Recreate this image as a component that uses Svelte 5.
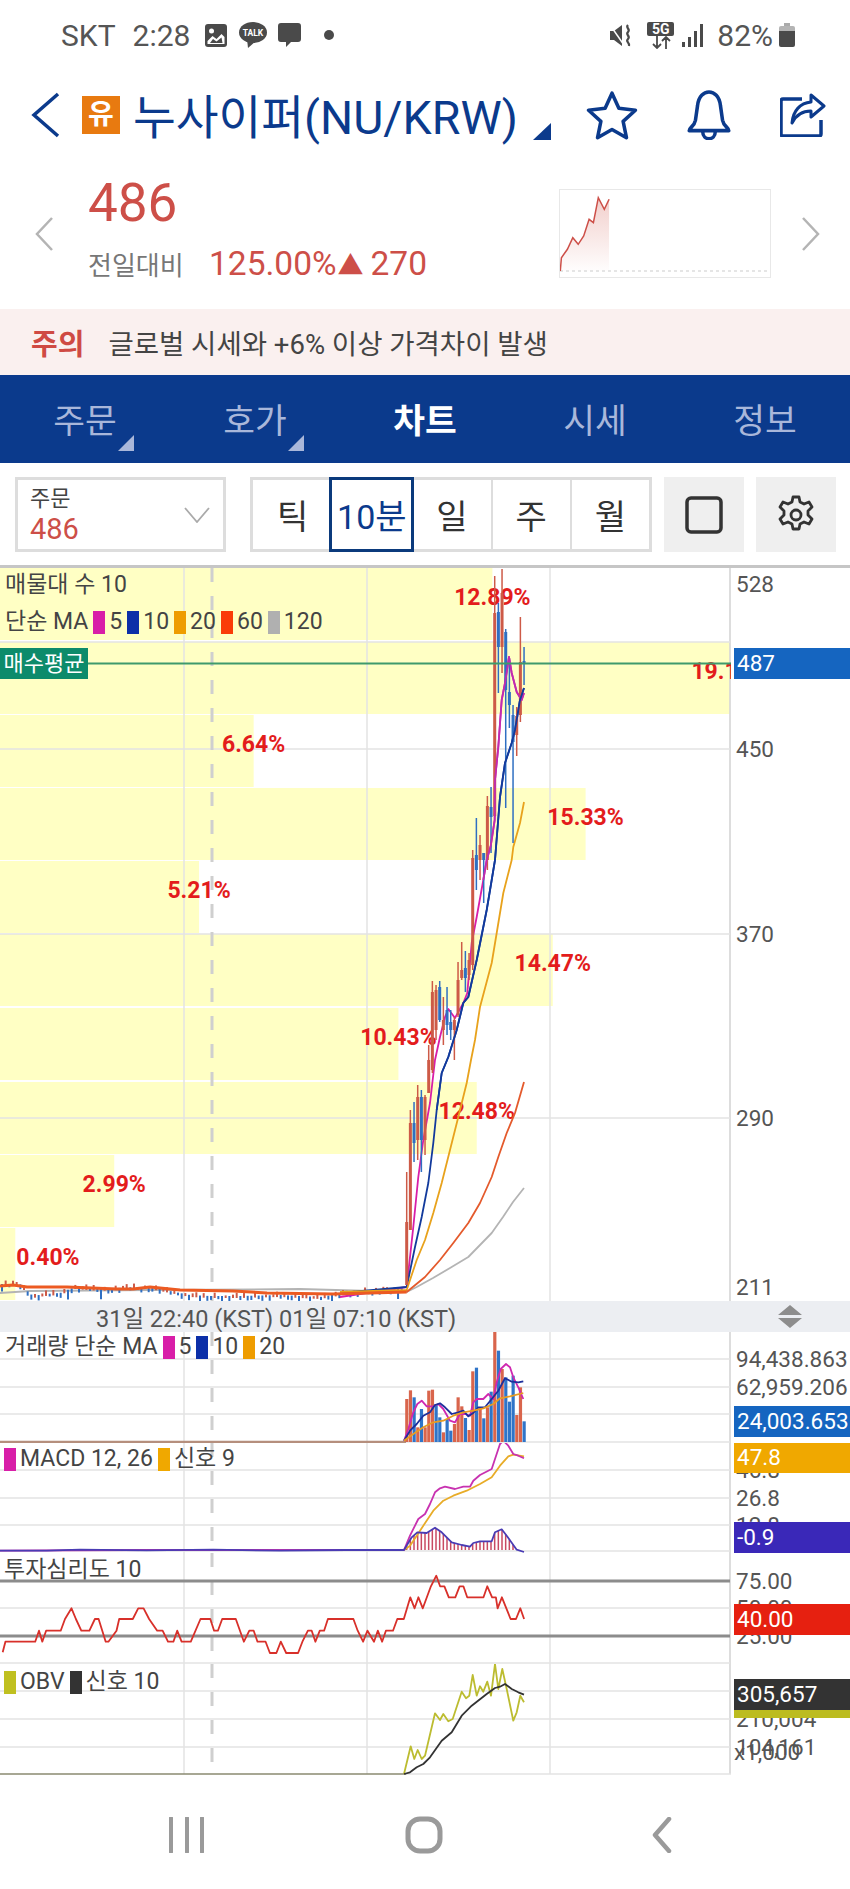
<script>
  // 화면 좌표 그대로 쓰는 차트 데이터 (viewBox가 페이지 y를 따른다)
  const gridX = [184, 367, 550];

  const line = (arr, ox = 0, oy = 0, sx = 1, sy = 1) =>
    arr.map(([x, y]) => `${(ox + x * sx).toFixed(1)},${(oy + y * sy).toFixed(1)}`).join(" ");

  // 매물대
  const bandTops = [568, 642, 715, 788, 861, 934, 1008, 1082, 1155, 1228];
  const bandPct = [12.89, 19.1, 6.64, 15.33, 5.21, 14.47, 10.43, 12.48, 2.99, 0.4];
  const bands = bandTops.map((top, i) => {
    const width = bandPct[i] * 38.2;
    return {
      top,
      width,
      label: bandPct[i].toFixed(2) + "%",
      x: Math.max(width, 48),
      y: top + 37
    };
  });

  // [색, 고가, 저가, 몸통위, 몸통아래]
  const R = "#cd5a47";
  const B = "#2f6fc2";
  const candles = [
    [R, 1172, 1285, 1222, 1285], [R, 1110, 1230, 1123, 1230], [B, 1102, 1162, 1123, 1143],
    [R, 1085, 1160, 1097, 1140], [B, 1090, 1172, 1097, 1140], [R, 1095, 1155, 1097, 1140],
    [R, 1045, 1093, 1060, 1093], [R, 981, 1073, 992, 1070], [R, 985, 1040, 990, 1030],
    [B, 981, 1022, 987, 1020], [R, 997, 1045, 1020, 1030], [B, 987, 1035, 1010, 1025],
    [B, 1010, 1040, 1022, 1030], [R, 1017, 1060, 1020, 1030], [R, 962, 1017, 980, 1015],
    [R, 942, 980, 970, 978], [B, 951, 992, 968, 978], [R, 953, 980, 960, 975],
    [R, 850, 970, 858, 965], [B, 818, 890, 855, 870], [R, 835, 880, 845, 860],
    [B, 853, 903, 853, 860], [R, 796, 870, 806, 860], [B, 787, 853, 807, 817],
    [R, 576, 817, 613, 816], [B, 603, 693, 612, 647], [R, 569, 673, 593, 647],
    [B, 629, 808, 632, 690], [B, 658, 728, 692, 705], [B, 705, 843, 715, 742],
    [R, 707, 756, 716, 735], [R, 617, 722, 662, 715], [B, 647, 685, 661, 664]
  ].map(([color, hi, lo, top, bottom], i) => ({ color, hi, lo, top, bottom, x: 406.7 + i * 3.667 }));

  // 급등 전 횡보 구간
  const flatLevels = [
    [0, 1285], [20, 1285], [25, 1290], [33, 1297], [45, 1295], [60, 1294], [75, 1288], [100, 1290],
    [135, 1288], [150, 1288], [170, 1292], [190, 1296], [210, 1297], [240, 1297], [280, 1296],
    [320, 1298], [350, 1293], [406, 1289]
  ];
  const levelAt = (x) => {
    for (let i = 1; i < flatLevels.length; i++) {
      const [x0, y0] = flatLevels[i - 1];
      const [x1, y1] = flatLevels[i];
      if (x <= x1) return y0 + ((x - x0) / (x1 - x0)) * (y1 - y0);
    }
    return 1289;
  };
  const flatCandles = Array.from({ length: 110 }, (_, i) => {
    const x = 2 + i * 3.667;
    const up = Math.sin(i * 2.3) > 0.1;
    const size = 1.5 + Math.abs(Math.sin(i * 1.7)) * 3;
    const y = levelAt(x);
    return {
      x,
      color: up ? R : B,
      y1: up ? y - size : y - 1,
      y2: up ? y + 1 : y + size + (i % 9 === 0 ? 5 : 0)
    };
  });

  const ma5 = [[340, 1297], [406.7, 1287], [413.3, 1227], [418.3, 1177], [423.3, 1140], [430, 1103], [435, 1060], [440, 1037], [445, 1017], [448.3, 1009], [455, 1018], [463.3, 1003], [467.3, 993], [471.7, 943], [476.7, 917], [483.3, 880], [486.7, 860], [490.7, 846], [494.7, 820], [495, 780], [498.3, 747], [501.7, 700], [505, 683], [509, 657], [511.7, 673], [516.7, 692], [521.7, 700], [524, 693]];
  const ma10 = [[340, 1293], [406.7, 1287], [415, 1247], [421.7, 1217], [428.3, 1183], [433.3, 1143], [436.7, 1110], [441.7, 1073], [448.3, 1057], [456.7, 1030], [463.3, 1003], [468.3, 997], [476.7, 960], [486.7, 910], [491.7, 880], [495, 860], [500, 797], [505, 763], [511.7, 743], [515, 730], [520, 700], [524, 688]];
  const ma20 = [[340, 1292], [406.7, 1290], [416.7, 1260], [425, 1240], [433.3, 1213], [441.7, 1183], [450, 1150], [458.3, 1117], [466.7, 1083], [471, 1060], [475, 1040], [480, 1007], [491.7, 963], [496.7, 933], [503.3, 893], [511.7, 860], [513.3, 847], [520, 823], [524, 802]];
  const ma60Flat = [[0, 1286], [13, 1285], [27, 1287], [67, 1287], [117, 1289], [133, 1289], [150, 1287], [180, 1290], [233, 1291], [267, 1293], [333, 1294], [406.7, 1292]];
  const ma60 = [[406.7, 1292], [425, 1277], [440, 1260], [453.3, 1243], [468.3, 1223], [480, 1203], [491.7, 1177], [498.3, 1157], [506.7, 1133], [515, 1113], [524, 1082]];
  const ma120 = [[0, 1293], [30, 1291], [150, 1290], [300, 1289], [406.7, 1292], [416.7, 1287], [433, 1278], [450, 1268], [468.3, 1257], [480, 1245], [491.7, 1233], [503, 1217], [513, 1202], [524, 1188]];

  const legendMain = [["#d81ea8", "5"], ["#0c2fa8", "10"], ["#ee9c00", "20"], ["#fa3c08", "60"], ["#b0b0b0", "120"]];

  // 거래량 (줌 좌표: x=380+X/3, y=1320+Y/3)
  const volTops = [240, 214, 235, 325, 270, 325, 215, 212, 255, 295, 340, 300, 335, 315, 235, 262, 297, 333, 157, 146, 265, 298, 265, 218, 38, 95, 150, 175, 248, 170, 288, 205, 307];
  const volColors = "RRBRBRRRBBRBBRRRBRRBRBRBRBRBBBRRB";
  const volumes = volTops.map((y, i) => ({
    x: 406.7 + i * 3.667,
    y: 1320 + y / 3,
    color: volColors[i] === "R" ? "#d9654c" : "#2f74c8"
  }));
  const volMa5 = [[72, 365], [85, 330], [100, 280], [112, 255], [125, 245], [140, 262], [160, 262], [175, 255], [190, 270], [210, 305], [225, 310], [240, 285], [255, 285], [270, 290], [280, 250], [290, 240], [310, 240], [325, 225], [340, 240], [350, 190], [362, 150], [378, 135], [390, 145], [400, 175], [415, 205], [430, 240]];
  const volMa10 = [[72, 365], [90, 335], [110, 315], [130, 290], [150, 280], [165, 258], [180, 253], [195, 265], [215, 285], [235, 280], [250, 275], [265, 292], [280, 282], [295, 265], [315, 265], [335, 240], [355, 215], [375, 178], [395, 188], [415, 190], [430, 187]];
  const volMa20 = [[72, 365], [100, 345], [130, 325], [160, 310], [190, 305], [220, 290], [250, 280], [280, 275], [310, 268], [340, 255], [360, 238], [390, 232], [430, 222]];

  // MACD (줌 좌표: x=380+X/3, y=1440+Y/3)
  const macd = [[-1140, 335], [-700, 333], [72, 333], [90, 290], [115, 240], [135, 225], [150, 195], [165, 160], [180, 148], [195, 143], [225, 150], [250, 143], [270, 143], [280, 125], [300, 108], [335, 90], [345, 60], [360, 15], [370, 5], [385, 20], [400, 45], [415, 50], [432, 58]];
  const signal = [[72, 333], [90, 320], [110, 290], [130, 260], [160, 215], [190, 185], [220, 170], [260, 155], [300, 135], [335, 115], [360, 80], [385, 52], [400, 47], [432, 52]];
  const osc = [[-1140, 335], [-1000, 335], [-900, 332], [-700, 334], [-500, 332], [-300, 335], [-100, 333], [72, 333], [95, 295], [112, 280], [140, 282], [165, 266], [185, 280], [215, 310], [245, 318], [270, 323], [280, 312], [300, 307], [335, 307], [345, 280], [365, 271], [380, 290], [410, 332], [432, 339]];
  const oscAt = (x) => {
    for (let i = 1; i < osc.length; i++) {
      const [x0, y0] = osc[i - 1];
      const [x1, y1] = osc[i];
      if (x <= x1) return y0 + ((x - x0) / (x1 - x0)) * (y1 - y0);
    }
    return 333;
  };
  const oscBars = Array.from({ length: 31 }, (_, i) => {
    const X = 80 + i * 11;
    return { x: 380 + X / 3, y: 1440 + oscAt(X) / 3 };
  });

  // 투자심리도 (줌 좌표: x=X/1.845, y=1530+Y/3)
  const psy = [[5, 370], [10, 338], [65, 338], [72, 305], [78, 338], [85, 305], [112, 305], [120, 270], [132, 238], [140, 270], [150, 305], [165, 305], [175, 270], [182, 270], [195, 338], [200, 338], [215, 305], [220, 270], [245, 270], [255, 238], [265, 238], [275, 270], [290, 305], [300, 305], [310, 338], [320, 338], [327, 305], [335, 338], [352, 338], [370, 270], [388, 270], [395, 305], [402, 305], [410, 270], [435, 270], [450, 338], [460, 305], [468, 305], [475, 338], [490, 338], [498, 372], [510, 372], [518, 338], [528, 372], [550, 372], [558, 338], [568, 305], [575, 305], [582, 338], [590, 305], [598, 305], [605, 270], [652, 270], [660, 305], [670, 338], [678, 305], [690, 338], [697, 305], [705, 338], [712, 305], [725, 305], [733, 270], [745, 270], [757, 205], [765, 238], [772, 205], [780, 238], [795, 172], [805, 140], [812, 172], [820, 172], [828, 205], [840, 205], [848, 172], [855, 172], [862, 205], [892, 205], [899, 172], [908, 205], [915, 205], [918, 238], [926, 205], [942, 270], [952, 270], [960, 238], [967, 270]];

  // OBV (줌 좌표: x=380+X/3, y=1440+Y/3)
  const obv = [[72, 1005], [92, 922], [103, 960], [113, 933], [125, 960], [135, 950], [165, 823], [180, 843], [190, 825], [205, 847], [218, 840], [245, 758], [258, 778], [268, 770], [278, 708], [290, 770], [300, 742], [310, 758], [322, 728], [333, 770], [345, 675], [355, 750], [367, 690], [380, 750], [400, 845], [410, 820], [421, 770], [432, 790]];
  const obvSignal = [[72, 1005], [90, 1000], [110, 985], [130, 975], [150, 955], [185, 905], [215, 880], [245, 830], [275, 800], [320, 765], [345, 747], [360, 743], [375, 735], [395, 750], [415, 760], [432, 767]];

  const spark = [[1032, 810], [1034, 770], [1045, 745], [1055, 710], [1065, 730], [1075, 705], [1085, 655], [1093, 665], [1102, 590], [1113, 625], [1122, 595]];
  const sparkPts = spark.map(([x, y]) => [x / 1.845 - 559, y / 3 - 189]);
</script>

<div class="phone">
  <div class="status">
    <span class="carrier">SKT</span>
    <span class="clock">2:28</span>
    <svg class="pic" width="22" height="23" viewBox="0 0 22 23">
      <rect x="0" y="0" width="22" height="23" rx="3" fill="#4a4a4a" />
      <circle cx="6.500" cy="7" r="2.500" fill="#fff" />
      <path d="M2.500 20v-3l5-5 4 3 5-5 3 3v7z" fill="#fff" />
      <path d="M5 19l3-4 3.500 2.500 5-4 1 5.500z" fill="#4a4a4a" />
    </svg>
    <svg class="kakao" width="28" height="26" viewBox="0 0 28 26">
      <ellipse cx="14" cy="10.500" rx="14" ry="10.500" fill="#4a4a4a" />
      <path d="M8 17l1 9 8-7z" fill="#4a4a4a" />
      <text x="14" y="13.500" class="kakao-text">TALK</text>
    </svg>
    <svg class="chat" width="23" height="24" viewBox="0 0 23 24">
      <path d="M3 0h17a3 3 0 0 1 3 3v13a3 3 0 0 1-3 3h-7l-5 5v-5H3a3 3 0 0 1-3-3V3a3 3 0 0 1 3-3z" fill="#4a4a4a" />
    </svg>
    <span class="dot"></span>
    <span class="spacer"></span>
    <svg width="24" height="23" viewBox="0 0 24 23">
      <path d="M0 7h4l8-6v21l-8-6H0z" fill="#4a4a4a" />
      <path d="M0 1l14 20" stroke="#fff" stroke-width="1.500" />
      <path d="M18 1c-3 3 3 4 0 7s3 4 0 7 2 3 1 7" fill="none" stroke="#4a4a4a" stroke-width="2.200" />
    </svg>
    <span class="net">
      <b>5G</b>
      <svg width="22" height="13" viewBox="0 0 22 13">
        <path d="M7 0v12M3 8l4 4 4-4M16 13V1M12 5l4-4 4 4" fill="none" stroke="#4a4a4a" stroke-width="1.800" />
      </svg>
    </span>
    <svg class="bars" width="21" height="23" viewBox="0 0 21 23">
      <rect x="0" y="18" width="3" height="5" fill="#4a4a4a" />
      <rect x="6" y="13" width="3" height="10" fill="#4a4a4a" />
      <rect x="12" y="7" width="3" height="16" fill="#4a4a4a" />
      <rect x="18" y="0" width="3" height="23" fill="#4a4a4a" />
    </svg>
    <span class="batt-text">82%</span>
    <svg width="16" height="24" viewBox="0 0 16 24">
      <path d="M5 0h6v3H5z" fill="#aaa" />
      <path d="M2 3h12a2 2 0 0 1 2 2v4H0V5a2 2 0 0 1 2-2z" fill="#b4b4b4" />
      <path d="M0 8h16v14a2 2 0 0 1-2 2H2a2 2 0 0 1-2-2z" fill="#4a4a4a" />
    </svg>
  </div>

  <header class="title-row">
    <svg class="back" width="29" height="46" viewBox="0 0 29 46">
      <path d="M27 2L3 23l24 21" fill="none" stroke="#0b3a8c" stroke-width="3.500" />
    </svg>
    <span class="badge">유</span>
    <h1>누사이퍼(NU/KRW)</h1>
    <span class="corner title-corner"></span>
    <div class="actions">
      <svg width="52" height="50" viewBox="0 0 50 48">
        <path d="M25 3l6.600 14.600 15.900 1.800-11.800 10.700 3.200 15.700L25 37.900l-13.900 7.900 3.200-15.700L2.500 19.400l15.900-1.800z" fill="none" stroke="#0b3a8c" stroke-width="3.400" stroke-linejoin="round" />
      </svg>
      <svg width="46" height="50" viewBox="0 0 44 48">
        <path d="M3 39c0-3 5-4 6-10l2-14C12 6 17 2 22 2s10 4 11 13l2 14c1 6 6 7 6 10z" fill="none" stroke="#0b3a8c" stroke-width="3.400" stroke-linejoin="round" />
        <path d="M16 40c0 9 12 9 12 0" fill="none" stroke="#0b3a8c" stroke-width="3.400" />
      </svg>
      <svg width="46" height="44" viewBox="0 0 46 44">
        <path d="M22 6H3a2 2 0 0 0-2 2v33a2 2 0 0 0 2 2h36a2 2 0 0 0 2-2V27" fill="none" stroke="#0b3a8c" stroke-width="3.500" />
        <path d="M31 2l13 11-13 11v-6c-9 0-15 4-19 12 1-12 8-20 19-21z" fill="none" stroke="#0b3a8c" stroke-width="3" stroke-linejoin="round" />
      </svg>
    </div>
  </header>

  <section class="quote">
    <svg class="pager" width="19" height="34" viewBox="0 0 19 34">
      <path d="M17 1L2 17l15 16" fill="none" stroke="#b4b4b4" stroke-width="2.500" />
    </svg>
    <div class="quote-text">
      <div class="price">486</div>
      <div class="change">
        <span class="change-label">전일대비</span>
        <span class="change-val">125.00%</span>
        <span class="change-arrow">▲</span>
        <span class="change-val">270</span>
      </div>
    </div>
    <div class="mini">
      <svg width="210" height="87" viewBox="0 0 210 87">
        <defs>
          <linearGradient id="sparkFill" x1="0" y1="0" x2="0" y2="1">
            <stop offset="0" stop-color="#e7a8a2" stop-opacity="0.55" />
            <stop offset="1" stop-color="#e7a8a2" stop-opacity="0.02" />
          </linearGradient>
        </defs>
        <polygon points="{line(sparkPts)} 49,81 0,81" fill="url(#sparkFill)" />
        <line x1="0" y1="81" x2="210" y2="81" stroke="#ddd" stroke-width="1.500" stroke-dasharray="3 3" />
        <polyline points={line(sparkPts)} fill="none" stroke="#cd4f48" stroke-width="1.500" />
      </svg>
    </div>
    <svg class="pager" width="19" height="34" viewBox="0 0 19 34">
      <path d="M2 1l15 16L2 33" fill="none" stroke="#b4b4b4" stroke-width="2.500" />
    </svg>
  </section>

  <div class="notice">
    <b>주의</b>
    <span>글로벌 시세와 +6% 이상 가격차이 발생</span>
  </div>

  <nav class="tabs">
    <div class="tab">주문<span class="corner light"></span></div>
    <div class="tab">호가<span class="corner light"></span></div>
    <div class="tab active">차트</div>
    <div class="tab">시세</div>
    <div class="tab">정보</div>
  </nav>

  <div class="toolbar">
    <div class="select">
      <div class="select-text">
        <span class="select-name">주문</span>
        <span class="select-price">486</span>
      </div>
      <svg width="26" height="16" viewBox="0 0 26 16">
        <path d="M1 1l12 14L25 1" fill="none" stroke="#aaa" stroke-width="1.800" />
      </svg>
    </div>
    <div class="segments">
      <button>틱</button>
      <button class="on">10분</button>
      <button>일</button>
      <button>주</button>
      <button>월</button>
    </div>
    <div class="square">
      <svg width="38" height="38" viewBox="0 0 38 38">
        <rect x="2" y="2" width="34" height="34" rx="4" fill="none" stroke="#333" stroke-width="3.500" />
      </svg>
    </div>
    <div class="square">
      <svg width="40" height="40" viewBox="0 0 40 40">
        <path d="M17 2h6l1 5 4 2 5-2 3 5-4 4v4l4 4-3 5-5-2-4 2-1 5h-6l-1-5-4-2-5 2-3-5 4-4v-4l-4-4 3-5 5 2 4-2z" fill="none" stroke="#333" stroke-width="2.800" stroke-linejoin="round" />
        <circle cx="20" cy="20" r="5" fill="none" stroke="#333" stroke-width="2.800" />
      </svg>
    </div>
  </div>

  <div class="chart">
    <!-- 가격 -->
    <div class="pane main">
      <svg class="plot" width="731" height="733" viewBox="0 568 731 733">
        {#each bands as b}
          <rect x="0" y={b.top} width={b.width} height="72" fill="#ffffc4" />
        {/each}
        {#each gridX as x}
          <line x1={x} y1="568" x2={x} y2="1301" class="grid" />
        {/each}
        <line x1="730" y1="568" x2="730" y2="1301" class="grid axis-line" />
        {#each [642, 749, 934, 1118] as y}
          <line x1="0" y1={y} x2="730" y2={y} class="grid" />
        {/each}
        <line x1="212" y1="568" x2="212" y2="1301" class="dash" />
        {#each bands as b}
          <text x={b.x} y={b.y} class="pct">{b.label}</text>
        {/each}
        <polyline points={line(ma120)} class="ma" stroke="#b4b4b4" />
        {#each flatCandles as c}
          <line x1={c.x} y1={c.y1} x2={c.x} y2={c.y2} stroke={c.color} stroke-width="2" />
        {/each}
        <polyline points={line(ma5)} class="ma" stroke="#d81ea8" />
        <polyline points={line(ma10)} class="ma" stroke="#123a9c" />
        <polyline points={line(ma20)} class="ma" stroke="#e8a21c" />
        <polyline points={line(ma60Flat)} class="ma thick" stroke="#ec5a22" />
        <polyline points={line(ma60)} class="ma" stroke="#e45a2c" />
        {#each candles as c}
          <line x1={c.x} y1={c.hi} x2={c.x} y2={c.lo} stroke={c.color} stroke-width="1.500" />
          <rect x={c.x - 1.5} y={c.top} width="3" height={c.bottom - c.top} fill={c.color} />
        {/each}
        <polyline points={line(ma5.slice(15))} class="ma" stroke="#c02cb0" />
        <polyline points={line(ma10.slice(6))} class="ma" stroke="#123a9c" />
        <line x1="88" y1="663.500" x2="731" y2="663.500" stroke="#3f9a6c" stroke-width="2" />
      </svg>
      <div class="legend first">매물대 수 10</div>
      <div class="legend second">
        <span>단순 MA</span>
        {#each legendMain as [color, label]}
          <i style="background:{color}"></i><span>{label}</span>
        {/each}
      </div>
      <div class="buy-tag">매수평균</div>
      <div class="axis">
        <span class="tick" style="top:16px">528</span>
        <span class="tick" style="top:181px">450</span>
        <span class="tick" style="top:366px">370</span>
        <span class="tick" style="top:550px">290</span>
        <span class="tick" style="top:719px">211</span>
        <span class="tag blue" style="top:80px">487</span>
      </div>
    </div>

    <div class="timebar">
      <span>31일 22:40 (KST) 01일 07:10 (KST)</span>
      <svg width="26" height="24" viewBox="0 0 26 24">
        <path d="M13 0l12 10H1zM1 13h24L13 23z" fill="#8d8d8d" />
      </svg>
    </div>

    <!-- 거래량 -->
    <div class="pane vol">
      <svg class="plot" width="731" height="111" viewBox="0 1333 731 111">
        {#each gridX as x}
          <line x1={x} y1="1333" x2={x} y2="1444" class="grid" />
        {/each}
        <line x1="730" y1="1333" x2="730" y2="1444" class="grid axis-line" />
        {#each [1360, 1388, 1415] as y}
          <line x1="0" y1={y} x2="730" y2={y} class="grid" />
        {/each}
        <line x1="212" y1="1333" x2="212" y2="1444" class="dash" />
        <line x1="0" y1="1443" x2="406" y2="1443" stroke="#b58f7d" stroke-width="2.500" />
        <line x1="406" y1="1443" x2="730" y2="1443" class="grid" />
        {#each volumes as v}
          <rect x={v.x - 1.5} y={v.y} width="3.200" height={1443 - v.y} fill={v.color} />
        {/each}
        <polyline points={line(volMa5, 380, 1320, 1 / 3, 1 / 3)} class="ma" stroke="#cf28b0" />
        <polyline points={line(volMa10, 380, 1320, 1 / 3, 1 / 3)} class="ma" stroke="#1d2f9c" />
        <polyline points={line(volMa20, 380, 1320, 1 / 3, 1 / 3)} class="ma" stroke="#e89c22" />
      </svg>
      <div class="legend vol-legend">
        <span>거래량 단순 MA</span>
        <i style="background:#d81ea8"></i><span>5</span>
        <i style="background:#0c2fa8"></i><span>10</span>
        <i style="background:#ee9c00"></i><span>20</span>
      </div>
      <div class="axis">
        <span class="tick" style="top:27px">94,438.863</span>
        <span class="tick" style="top:55px">62,959.206</span>
        <span class="tag blue" style="top:74px">24,003.653</span>
      </div>
    </div>

    <!-- MACD -->
    <div class="pane macd">
      <svg class="plot" width="731" height="110" viewBox="0 1444 731 110">
        {#each gridX as x}
          <line x1={x} y1="1444" x2={x} y2="1554" class="grid" />
        {/each}
        <line x1="730" y1="1444" x2="730" y2="1554" class="grid axis-line" />
        {#each [1471, 1499, 1526, 1552] as y}
          <line x1="0" y1={y} x2="730" y2={y} class="grid" />
        {/each}
        <line x1="212" y1="1444" x2="212" y2="1554" class="dash" />
        {#each oscBars as b}
          <line x1={b.x} y1="1551" x2={b.x} y2={b.y} stroke="#c84a62" stroke-width="1.500" />
        {/each}
        <polyline points={line(signal, 380, 1440, 1 / 3, 1 / 3)} class="ma" stroke="#e8ac28" />
        <polyline points={line(macd, 380, 1440, 1 / 3, 1 / 3)} class="ma" stroke="#c832b0" />
        <polyline points={line(osc, 380, 1440, 1 / 3, 1 / 3)} class="ma" stroke="#4a3cb4" />
      </svg>
      <div class="legend macd-legend">
        <i style="background:#d81ea8"></i><span>MACD 12, 26</span>
        <i style="background:#f0a800"></i><span>신호 9</span>
      </div>
      <div class="axis">
        <span class="tick" style="top:27px">46.8</span>
        <span class="tick" style="top:55px">26.8</span>
        <span class="tick" style="top:82px">12.8</span>
        <span class="tag orange" style="top:-1px">47.8</span>
        <span class="tag violet" style="top:79px">-0.9</span>
      </div>
    </div>

    <!-- 투자심리도 -->
    <div class="pane psy">
      <svg class="plot" width="731" height="111" viewBox="0 1554 731 111">
        {#each gridX as x}
          <line x1={x} y1="1554" x2={x} y2="1665" class="grid" />
        {/each}
        <line x1="730" y1="1554" x2="730" y2="1665" class="grid axis-line" />
        <line x1="0" y1="1609" x2="730" y2="1609" class="grid" />
        <line x1="0" y1="1664" x2="730" y2="1664" class="grid" />
        <line x1="212" y1="1554" x2="212" y2="1665" class="dash" />
        <line x1="0" y1="1582" x2="730" y2="1582" class="heavy" />
        <line x1="0" y1="1637" x2="730" y2="1637" class="heavy" />
        <polyline points={line(psy, 0, 1530, 1 / 1.845, 1 / 3)} class="ma" stroke="#d8302a" />
      </svg>
      <div class="legend psy-legend">투자심리도 10</div>
      <div class="axis">
        <span class="tick" style="top:28px">75.00</span>
        <span class="tick" style="top:55px">50.00</span>
        <span class="tick" style="top:83px">25.00</span>
        <span class="tag red" style="top:51px">40.00</span>
      </div>
    </div>

    <!-- OBV -->
    <div class="pane obv">
      <svg class="plot" width="731" height="111" viewBox="0 1665 731 111">
        {#each gridX as x}
          <line x1={x} y1="1665" x2={x} y2="1775" class="grid" />
        {/each}
        <line x1="730" y1="1665" x2="730" y2="1775" class="grid axis-line" />
        {#each [1692, 1720, 1748] as y}
          <line x1="0" y1={y} x2="730" y2={y} class="grid" />
        {/each}
        <line x1="212" y1="1665" x2="212" y2="1775" class="dash" />
        <line x1="0" y1="1775" x2="406" y2="1775" stroke="#8a8a70" stroke-width="1.500" />
        <line x1="406" y1="1775" x2="850" y2="1775" class="grid" />
        <polyline points={line(obv, 380, 1440, 1 / 3, 1 / 3)} class="ma" stroke="#bcbc30" />
        <polyline points={line(obvSignal, 380, 1440, 1 / 3, 1 / 3)} class="ma" stroke="#333" />
      </svg>
      <div class="legend obv-legend">
        <i style="background:#c0c020"></i><span>OBV</span>
        <i style="background:#333"></i><span>신호 10</span>
      </div>
      <div class="axis">
        <span class="tick" style="top:55px">210,004</span>
        <span class="tick" style="top:83px">104,161</span>
        <span class="tick unit" style="top:88px">x1,000</span>
        <span class="tag olive" style="top:23px"></span>
        <span class="tag dark" style="top:15px">305,657</span>
      </div>
    </div>
  </div>

  <div class="navbar">
    <svg width="36" height="36" viewBox="0 0 36 36">
      <path d="M2 1v34M18 1v34M33 1v34" stroke="#9a9a9a" stroke-width="4" fill="none" stroke-linecap="round" />
    </svg>
    <svg class="home" width="38" height="38" viewBox="0 0 38 38">
      <rect x="3" y="3" width="32" height="32" rx="12" fill="none" stroke="#9a9a9a" stroke-width="5" />
    </svg>
    <svg width="20" height="36" viewBox="0 0 20 36">
      <path d="M17 2L3 18l14 16" stroke="#9a9a9a" stroke-width="4.500" fill="none" stroke-linecap="round" stroke-linejoin="round" />
    </svg>
  </div>
</div>

<style>
  :global(body) {
    margin: 0;
    background: #fff;
  }

  .phone {
    width: 850px;
    height: 1889px;
    overflow: hidden;
    font-family: Roboto, "Noto Sans CJK KR", sans-serif;
    color: #444;
    background: #fff;
  }

  /* 상태바 */
  .status {
    height: 60px;
    padding: 10px 55px 0 61px;
    box-sizing: border-box;
    display: flex;
    align-items: center;
    color: #555;
    font-size: 30px;
  }
  .status svg {
    flex: none;
  }
  .clock {
    margin-left: 17px;
  }
  .pic {
    margin-left: 15px;
  }
  .kakao {
    margin-left: 12px;
  }
  .kakao-text {
    fill: #fff;
    font-size: 8.500px;
    font-weight: 700;
    text-anchor: middle;
  }
  .chat {
    margin-left: 11px;
  }
  .dot {
    width: 10px;
    height: 10px;
    margin-left: 23px;
    border-radius: 50%;
    background: #4a4a4a;
  }
  .spacer {
    flex: 1;
  }
  .net {
    width: 27px;
    margin: 0 8px 0 13px;
    display: flex;
    flex-direction: column;
    align-items: center;
  }
  .net b {
    width: 100%;
    background: #4a4a4a;
    color: #fff;
    font-size: 14px;
    line-height: 14px;
    text-align: center;
    border-radius: 2px;
  }
  .batt-text {
    margin: 0 6px 0 14px;
  }

  /* 종목 헤더 */
  .title-row {
    height: 110px;
    padding: 0 24px 0 31px;
    box-sizing: border-box;
    display: flex;
    align-items: center;
  }
  .badge {
    margin-left: 22px;
    width: 38px;
    height: 38px;
    background: #e87a10;
    color: #fff;
    font-size: 28px;
    font-weight: 700;
    line-height: 38px;
    text-align: center;
  }
  h1 {
    margin: 0 0 3px 13px;
    color: #0b3a8c;
    font-size: 46.500px;
    font-weight: 400;
    white-space: nowrap;
  }
  .corner {
    width: 0;
    height: 0;
    border-style: solid;
    border-width: 0 0 16px 16px;
    border-color: transparent transparent #0b3a8c transparent;
  }
  .title-corner {
    margin: 32px 0 0 15px;
    border-width: 0 0 17px 18px;
  }
  .actions {
    margin-left: auto;
    display: flex;
    align-items: center;
    gap: 48px;
  }

  /* 현재가 */
  .quote {
    height: 139px;
    padding: 0 30px 12px 35px;
    box-sizing: border-box;
    display: flex;
    align-items: center;
  }
  .quote-text {
    margin-left: 34px;
    flex: 1;
  }
  .price {
    color: #cd4f48;
    font-size: 53px;
    line-height: 60px;
  }
  .change {
    display: flex;
    align-items: center;
    height: 62px;
  }
  .change-label {
    width: 121px;
    color: #777;
    font-size: 26px;
    white-space: nowrap;
  }
  .change-val {
    color: #cd4f48;
    font-size: 33.500px;
  }
  .change-arrow {
    margin: 0 7px 0 1px;
    color: #cd4f48;
    font-size: 26px;
  }
  .mini {
    width: 210px;
    height: 87px;
    margin-right: 30px;
    flex: none;
    border: 1px solid #e8e8e8;
  }
  .mini svg {
    display: block;
  }

  /* 주의 */
  .notice {
    height: 66px;
    padding-left: 31px;
    display: flex;
    align-items: center;
    gap: 24px;
    background: #faf0ef;
    font-size: 27.500px;
  }
  .notice b {
    color: #cf4a43;
    font-size: 29px;
  }

  /* 탭 */
  .tabs {
    height: 88px;
    display: grid;
    grid-template-columns: repeat(5, 170px);
    background: #0b3a8c;
  }
  .tab {
    position: relative;
    padding-bottom: 2px;
    display: flex;
    align-items: center;
    justify-content: center;
    color: #a9b7da;
    font-size: 34.500px;
  }
  .tab.active {
    color: #fff;
    font-weight: 700;
  }
  .corner.light {
    position: absolute;
    left: 118px;
    top: 60px;
    border-color: transparent transparent #a9b7da transparent;
  }

  /* 툴바 */
  .toolbar {
    height: 102px;
    padding: 14px 14px 0 15px;
    box-sizing: border-box;
    display: flex;
    align-items: flex-start;
  }
  .select {
    flex: none;
    width: 211px;
    height: 75px;
    padding: 0 13px 0 12px;
    box-sizing: border-box;
    display: flex;
    align-items: center;
    justify-content: space-between;
    border: 3px solid #ddd;
  }
  .select-text {
    display: flex;
    flex-direction: column;
  }
  .select-name {
    font-size: 22px;
    line-height: 28px;
  }
  .select-price {
    color: #cd4f48;
    font-size: 29px;
    line-height: 32px;
  }
  .segments {
    flex: none;
    width: 402px;
    height: 75px;
    margin: 0 12px 0 24px;
    display: grid;
    grid-template-columns: repeat(5, 1fr);
    border: 3px solid #ddd;
    box-sizing: border-box;
  }
  .segments button {
    padding: 0;
    background: #fff;
    border: 0;
    border-left: 2px solid #ddd;
    color: #333;
    font: 400 34px Roboto, "Noto Sans CJK KR", sans-serif;
    white-space: nowrap;
  }
  .segments button:first-child {
    border-left: 0;
  }
  .segments button.on {
    position: relative;
    margin: -3px;
    border: 3px solid #0b3a7c;
    background: #fff;
    color: #0b3a8c;
    z-index: 1;
  }
  .square {
    width: 80px;
    height: 75px;
    flex: none;
    display: flex;
    align-items: center;
    justify-content: center;
    background: #efefef;
  }
  .square + .square {
    margin-left: 12px;
  }

  /* 차트 */
  .chart {
    border-top: 3px solid #c6c6c6;
  }
  .pane {
    position: relative;
    display: flex;
    background: #fff;
  }
  .main { height: 733px; }
  .vol { height: 111px; }
  .macd { height: 110px; }
  .psy { height: 111px; }
  .obv { height: 111px; }
  .plot {
    display: block;
    flex: none;
  }
  .grid {
    stroke: #e3e3e3;
    stroke-width: 1.500;
  }
  .axis-line {
    stroke: #d2d2d2;
  }
  .dash {
    stroke: #cfcfcf;
    stroke-width: 3;
    stroke-dasharray: 14 14;
  }
  .heavy {
    stroke: #8c8c8c;
    stroke-width: 3;
  }
  .ma {
    fill: none;
    stroke-width: 1.800;
    stroke-linejoin: round;
  }
  .ma.thick {
    stroke-width: 3;
  }
  .pct {
    fill: #e31c1c;
    font-size: 23px;
    font-weight: 700;
    text-anchor: middle;
  }
  .legend {
    position: absolute;
    left: 5px;
    display: flex;
    align-items: center;
    gap: 4px;
    color: #444;
    font-size: 23px;
    line-height: 26px;
    white-space: nowrap;
  }
  .legend i {
    width: 12px;
    height: 23px;
    margin-left: 1px;
  }
  .legend.first { top: 4px; }
  .legend.second { top: 41px; }
  .vol-legend { top: 2px; }
  .macd-legend { top: 3px; left: 3px; }
  .psy-legend { top: 4px; left: 4px; }
  .obv-legend { top: 5px; left: 3px; }
  .buy-tag {
    position: absolute;
    left: 0;
    top: 80px;
    width: 88px;
    height: 31px;
    background: #0d8b6b;
    color: #fff;
    font-size: 22px;
    line-height: 31px;
    text-align: center;
    white-space: nowrap;
  }
  .axis {
    position: relative;
    flex: 1;
    overflow: hidden;
    font-size: 22.500px;
    color: #555;
  }
  .tick {
    position: absolute;
    left: 5px;
    transform: translateY(-50%);
    white-space: nowrap;
  }
  .tick.unit {
    left: 3px;
  }
  .tag {
    position: absolute;
    left: 3px;
    right: 0;
    height: 31px;
    padding-left: 3px;
    box-sizing: border-box;
    color: #fff;
    line-height: 31px;
    white-space: nowrap;
  }
  .tag.blue { background: #1565c0; }
  .tag.orange { background: #f0a800; }
  .tag.violet { background: #3a28b8; }
  .tag.red { background: #e62010; }
  .tag.dark { background: #333; }
  .tag.olive { background: #bcbc20; }
  .timebar {
    height: 31px;
    padding: 0 47px 0 96px;
    display: flex;
    align-items: center;
    justify-content: space-between;
    background: #eceef2;
    color: #555;
    font-size: 23.500px;
    white-space: nowrap;
  }

  /* 하단 내비게이션 */
  .navbar {
    height: 113px;
    padding: 6px 178px 0 169px;
    box-sizing: border-box;
    display: flex;
    align-items: center;
    justify-content: space-between;
  }
  .home {
    margin-left: -10px;
  }
</style>
